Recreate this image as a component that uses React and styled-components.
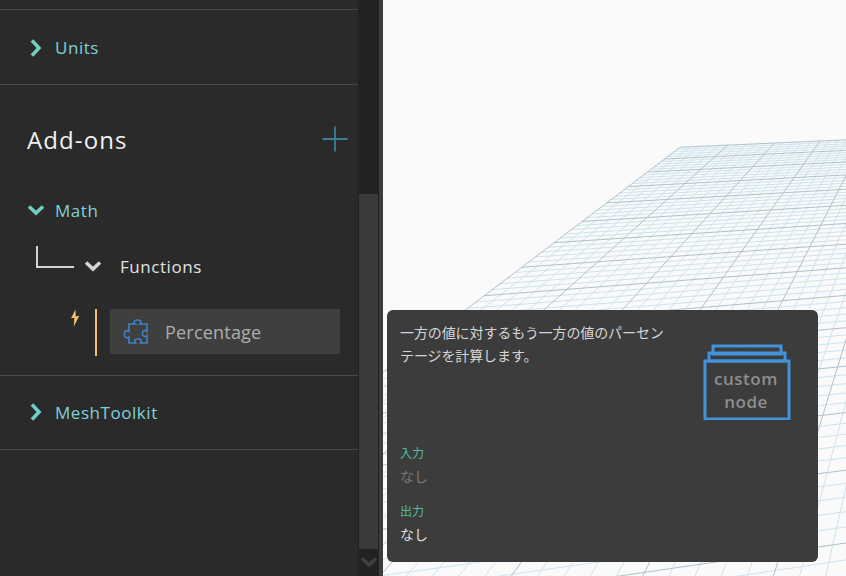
import React from "react";
import styled, { createGlobalStyle } from "styled-components";

const Global = createGlobalStyle`
  html, body { margin: 0; padding: 0; background: #fafafa; overflow: hidden; }
  * { box-sizing: border-box; }
`;

// ground plane: maps grid coordinates (major cells) to screen
function makeHomography(p0, p1, p2, p3, w, h) {
  const [x0, y0] = p0, [x1, y1] = p1, [x2, y2] = p2, [x3, y3] = p3;
  const dx1 = x1 - x2, dx2 = x3 - x2, sx = x0 - x1 + x2 - x3;
  const dy1 = y1 - y2, dy2 = y3 - y2, sy = y0 - y1 + y2 - y3;
  const det = dx1 * dy2 - dx2 * dy1;
  const g = (sx * dy2 - dx2 * sy) / det;
  const k = (dx1 * sy - sx * dy1) / det;
  const a = x1 - x0 + g * x1, b = x3 - x0 + k * x3;
  const d = y1 - y0 + g * y1, e = y3 - y0 + k * y3;
  return (u, v) => {
    const s = u / w, t = v / h;
    const q = g * s + k * t + 1;
    return [(a * s + b * t + x0) / q, (d * s + e * t + y0) / q];
  };
}

const project = makeHomography([680, 147.3], [820, 141], [723.3, 277.3], [484.3, 295.7], 3, 8);

const seg = (a, b) => `M${a[0].toFixed(1)} ${a[1].toFixed(1)}L${b[0].toFixed(1)} ${b[1].toFixed(1)}`;

function gridLines() {
  const minor = [];
  const major = [];
  // maxV stops short of the plane's camera line, past it the projection flips
  const maxU = 8, maxV = 16, step = 5;
  for (let n = 0; n <= maxU * step; n++) {
    const u = n / step;
    (n % step === 0 ? major : minor).push(seg(project(u, 0), project(u, maxV)));
  }
  for (let n = 0; n <= maxV * step; n++) {
    const v = n / step;
    (n % step === 0 ? major : minor).push(seg(project(0, v), project(maxU, v)));
  }
  return { minor: minor.join(""), major: major.join("") };
}

const lines = gridLines();

const Page = styled.div`
  display: flex;
  width: 846px;
  height: 576px;
  overflow: hidden;
  font-family: "Open Sans", "Noto Sans", "Noto Sans CJK JP", sans-serif;
`;

const Sidebar = styled.div`
  width: 358px;
  flex: none;
  background: #2a2a2a;
  padding-top: 9px;
`;

const Section = styled.div`
  border-top: 1px solid #4a4a4a;
  height: ${(p) => p.$height}px;
`;

const LastRule = styled.div`
  border-top: 1px solid #4a4a4a;
`;

const Row = styled.div`
  display: flex;
  align-items: center;
  height: ${(p) => p.$height || 75}px;
  padding-left: ${(p) => p.$indent || 0}px;
`;

const TopLabel = styled.span`
  margin-left: ${(p) => p.$gap}px;
  font-size: 17px;
  letter-spacing: 0.55px;
  color: #80d2d8;
`;

const HeaderRow = styled.div`
  display: flex;
  align-items: center;
  justify-content: space-between;
  height: 36px;
  margin-top: 36px;
  padding: 0 10px 0 27px;
`;

const Title = styled.h2`
  margin: 0;
  font-size: 24px;
  font-weight: 400;
  letter-spacing: 1.1px;
  color: #f1f1f1;
`;

const MathRow = styled(Row)`
  margin-top: 39px;
`;

const FunctionsRow = styled.div`
  display: flex;
  align-items: flex-end;
  margin-top: 22px;
  padding-left: 36px;
  height: 32px;
`;

const Elbow = styled.div`
  width: 38px;
  height: 22px;
  margin-bottom: 10px;
  border-left: 2px solid #d4d4d4;
  border-bottom: 2px solid #d4d4d4;
`;

const FunctionsInner = styled.div`
  display: flex;
  align-items: center;
  height: 24px;
  margin-left: 10px;
`;

const FunctionsLabel = styled.span`
  margin-left: 18px;
  font-size: 17px;
  letter-spacing: 0.55px;
  color: #e2e2e2;
`;

const LeafRow = styled.div`
  display: flex;
  margin-top: 31px;
  padding-left: 70px;
  height: 47px;
`;

const Bolt = styled.div`
  width: 25px;
`;

const Accent = styled.div`
  width: 2px;
  background: #fbbd68;
`;

const Leaf = styled.div`
  display: flex;
  align-items: center;
  width: 230px;
  height: 45px;
  margin-left: 13px;
  padding-left: 13px;
  background: #3f3f3f;
`;

const LeafLabel = styled.span`
  margin-left: 16px;
  font-size: 18px;
  letter-spacing: 0.2px;
  color: #aeaeae;
`;

const ScrollTrack = styled.div`
  width: 21px;
  flex: none;
  display: flex;
  flex-direction: column;
  align-items: center;
  background: #222222;
  padding-top: 194px;
`;

const ScrollThumb = styled.div`
  width: 19px;
  height: 355px;
  background: #3a3a3a;
`;

const ScrollArrow = styled.div`
  margin-top: 4px;
`;

const Divider = styled.div`
  width: 4px;
  flex: none;
  background: #3d3d3d;
`;

const Viewport = styled.div`
  position: relative;
  flex: 1;
  background: #fafafa;
  overflow: hidden;
`;

const GridCanvas = styled.svg`
  position: absolute;
  left: -383px;
  top: 0;
`;

const Tooltip = styled.div`
  position: absolute;
  left: 4px;
  top: 310px;
  width: 431px;
  height: 252px;
  padding: 11px 13px;
  border-radius: 6px;
  background: rgba(54, 54, 54, 0.97);
  display: flex;
  flex-direction: column;
  font-family: "Noto Sans CJK JP", "Noto Sans", sans-serif;
`;

const TooltipTop = styled.div`
  display: flex;
  justify-content: space-between;
  height: 123px;
`;

const Description = styled.p`
  width: 266px;
  margin: 0;
  font-size: 14px;
  line-height: 22.5px;
  letter-spacing: -0.1px;
  color: #d6d6d6;
`;

const NodeIcon = styled.svg`
  margin: 23px 14px 0 0;
`;

const PortLabel = styled.div`
  font-size: 12px;
  line-height: 18px;
  color: #4fbc9f;
`;

const PortValue = styled.div`
  margin-bottom: ${(p) => p.$gap || 0}px;
  font-size: 14px;
  line-height: 28px;
  color: ${(p) => p.$color};
`;

const Chevron = ({ down, color = "#6fcfc4" }) => (
  <svg width="18" height="18" viewBox="0 0 18 18">
    <path
      d={down ? "M2 5.500L9 12L16 5.500" : "M5 1.500L12 9L5 16.500"}
      fill="none"
      stroke={color}
      strokeWidth="3.6"
    />
  </svg>
);

const PuzzleIcon = () => (
  <svg width="26" height="28" viewBox="0 0 26 28" fill="none" stroke="#3f84c8" strokeWidth="1.6">
    <path d="M6 6h6c-1.600-1.200-1.600-4 2.500-4s4.100 2.800 2.500 4H24v7.500c-1.300-1.500-4.600-1.500-4.600 2s3.300 3.500 4.600 2V25h-6.500c1.500-1.500 1.400-4.300-2.500-4.300s-4 2.800-2.500 4.300H6v-6c-1.500 1.400-4.700 1.200-4.700-2.800s3.200-4.200 4.700-2.800V6z" />
  </svg>
);

const BoltIcon = () => (
  <svg width="10" height="18" viewBox="0 0 10 18">
    <path d="M5.500 0.500L1 9.200L4.300 8.800L3.800 17.500L9.300 6.800L5.800 7.400Z" fill="#f5c26c" />
  </svg>
);

const PlusIcon = () => (
  <svg width="26" height="26" viewBox="0 0 26 26">
    <path d="M13 0.500V25.500M0.500 13H25.500" stroke="#3a7f97" strokeWidth="1.800" />
  </svg>
);

const CustomNode = () => (
  <NodeIcon width="88" height="76" viewBox="0 0 88 76">
    <g fill="none" stroke="#4193dc" strokeWidth="3">
      <rect x="10" y="2" width="68" height="8" />
      <rect x="6" y="9" width="76" height="8" />
      <rect x="2" y="17" width="84" height="58" />
    </g>
    <g fill="#8e8e8e" fontSize="17" fontWeight="600" letterSpacing="0.5" fontFamily="Open Sans, sans-serif" textAnchor="middle">
      <text x="43" y="41">custom</text>
      <text x="43" y="64">node</text>
    </g>
  </NodeIcon>
);

export default function App() {
  return (
    <Page>
      <Global />
      <Sidebar>
        <Section $height={75}>
          <Row $indent={27}>
            <Chevron />
            <TopLabel $gap={10}>Units</TopLabel>
          </Row>
        </Section>
        <Section $height={291}>
          <HeaderRow>
            <Title>Add-ons</Title>
            <PlusIcon />
          </HeaderRow>
          <MathRow $height={28} $indent={27}>
            <Chevron down />
            <TopLabel $gap={10}>Math</TopLabel>
          </MathRow>
          <FunctionsRow>
            <Elbow />
            <FunctionsInner>
              <Chevron down color="#d4d4d4" />
              <FunctionsLabel>Functions</FunctionsLabel>
            </FunctionsInner>
          </FunctionsRow>
          <LeafRow>
            <Bolt>
              <BoltIcon />
            </Bolt>
            <Accent />
            <Leaf>
              <PuzzleIcon />
              <LeafLabel>Percentage</LeafLabel>
            </Leaf>
          </LeafRow>
        </Section>
        <Section $height={74}>
          <Row $height={72} $indent={27}>
            <Chevron />
            <TopLabel $gap={10}>MeshToolkit</TopLabel>
          </Row>
        </Section>
        <LastRule />
      </Sidebar>
      <ScrollTrack>
        <ScrollThumb />
        <ScrollArrow>
          <Chevron down color="#3f3f3f" />
        </ScrollArrow>
      </ScrollTrack>
      <Divider />
      <Viewport>
        <GridCanvas width="846" height="576" viewBox="0 0 846 576">
          <path d={lines.minor} stroke="#cde3ef" strokeWidth="1" fill="none" />
          <path d={lines.major} stroke="#aec1cb" strokeWidth="1" fill="none" />
        </GridCanvas>
        <Tooltip>
          <TooltipTop>
            <Description>一方の値に対するもう一方の値のパーセンテージを計算します。</Description>
            <CustomNode />
          </TooltipTop>
          <PortLabel>入力</PortLabel>
          <PortValue $color="#7a7a7a" $gap={12}>なし</PortValue>
          <PortLabel>出力</PortLabel>
          <PortValue $color="#e0e0e0">なし</PortValue>
        </Tooltip>
      </Viewport>
    </Page>
  );
}
